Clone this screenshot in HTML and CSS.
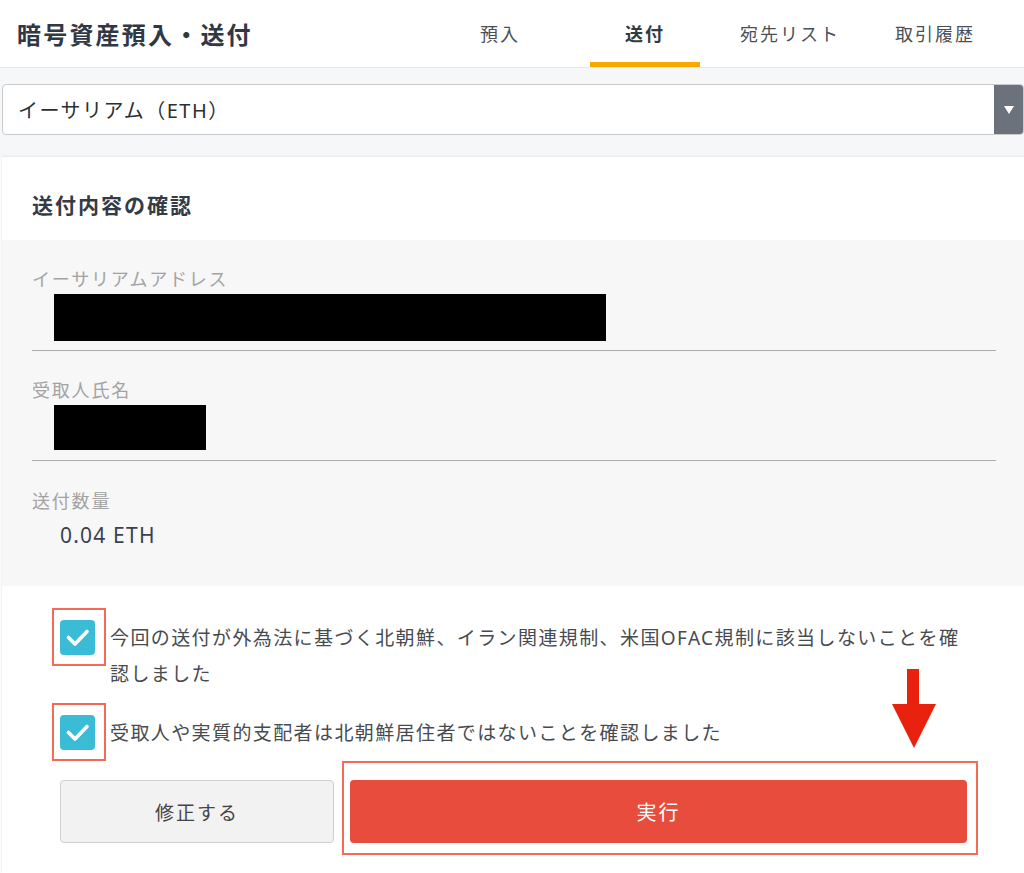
FILE: index.html
```html
<!DOCTYPE html>
<html lang="ja">
<head>
<meta charset="utf-8">
<title>暗号資産預入・送付</title>
<link rel="stylesheet" href="styles.css">
</head>
<body>
<header class="topbar">
  <h1 class="page-title">暗号資産預入・送付</h1>
  <nav class="tabs">
    <a class="tab">預入</a>
    <a class="tab active">送付</a>
    <a class="tab">宛先リスト</a>
    <a class="tab">取引履歴</a>
  </nav>
</header>

<div class="selector-area">
  <div class="select">
    <span class="select-text">イーサリアム（ETH）</span>
    <span class="select-arrow">
      <svg width="10" height="8" viewBox="0 0 10 8"><path d="M0 0 H10 L5 8 Z" fill="#fff"/></svg>
    </span>
  </div>
</div>

<section class="card">
  <h2 class="card-title">送付内容の確認</h2>
  <div class="details">
    <div class="field">
      <div class="field-label">イーサリアムアドレス</div>
      <div class="redacted redacted-address"></div>
    </div>
    <div class="field">
      <div class="field-label">受取人氏名</div>
      <div class="redacted redacted-name"></div>
    </div>
    <div class="field field-last">
      <div class="field-label">送付数量</div>
      <div class="field-value">0.04 ETH</div>
    </div>
  </div>

  <div class="confirm">
    <label class="check-row">
      <span class="highlight">
        <span class="checkbox">
          <svg width="35" height="35" viewBox="0 0 35 35"><path d="M8.5 17.5 L15 24 L27 11.5" fill="none" stroke="#fff" stroke-width="3.6" stroke-linecap="round" stroke-linejoin="round"/></svg>
        </span>
      </span>
      <span class="check-text">今回の送付が外為法に基づく北朝鮮、イラン関連規制、米国OFAC規制に該当しないことを確認しました</span>
    </label>
    <label class="check-row check-row-second">
      <span class="highlight">
        <span class="checkbox">
          <svg width="35" height="35" viewBox="0 0 35 35"><path d="M8.5 17.5 L15 24 L27 11.5" fill="none" stroke="#fff" stroke-width="3.6" stroke-linecap="round" stroke-linejoin="round"/></svg>
        </span>
      </span>
      <span class="check-text">受取人や実質的支配者は北朝鮮居住者ではないことを確認しました</span>
    </label>

    <div class="actions">
      <button class="btn btn-secondary">修正する</button>
      <div class="exec-highlight">
        <button class="btn btn-primary">実行</button>
      </div>
    </div>

    <svg class="arrow" width="44" height="79" viewBox="0 0 44 79">
      <rect x="15" y="0" width="12" height="36" fill="#e8220f"/>
      <path d="M0 35 H44 L22 79 Z" fill="#e8220f"/>
    </svg>
  </div>
</section>
</body>
</html>
```

FILE: styles.css
```css
* {
  box-sizing: border-box;
}

body {
  margin: 0;
  width: 1024px;
  background: #ffffff;
  font-family: "Noto Sans", "Noto Sans CJK JP", sans-serif;
  color: #333c48;
}

.topbar {
  display: flex;
  align-items: center;
  height: 68px;
  background: #ffffff;
  border-bottom: 1px solid #e9eaed;
  padding-left: 17px;
  padding-right: 34px;
}

.page-title {
  margin: 0;
  font-size: 24px;
  font-weight: 700;
  letter-spacing: 2.2px;
  color: #2f3844;
}

.tabs {
  margin-left: auto;
  display: flex;
  gap: 35px;
  align-self: stretch;
}

.tab {
  width: 110px;
  height: 67px;
  display: flex;
  align-items: center;
  justify-content: center;
  padding-top: 4px;
  border-bottom: 5px solid transparent;
  font-size: 18px;
  letter-spacing: 2px;
  color: #4a4f57;
}

.tab.active {
  border-bottom-color: #f8a900;
  font-weight: 700;
  color: #333a44;
}

.selector-area {
  background: #f6f7f9;
  padding: 16px 0 22px 2px;
}

.select {
  display: flex;
  height: 51px;
  background: #ffffff;
  border: 1px solid #c9cacc;
  border-radius: 4px;
  overflow: hidden;
}

.select-text {
  flex: 1;
  display: flex;
  align-items: center;
  padding-left: 15px;
  font-size: 20px;
  letter-spacing: 1.5px;
  color: #2b2f35;
}

.select-arrow {
  width: 29px;
  display: flex;
  align-items: center;
  justify-content: center;
  background: #6b727c;
}

.card {
  margin-left: 2px;
  background: #ffffff;
  box-shadow: 0 0 3px rgba(0, 0, 0, 0.12);
}

.card-title {
  margin: 0;
  height: 83px;
  padding: 36px 30px 0;
  font-size: 21px;
  line-height: 24px;
  font-weight: 700;
  letter-spacing: 2px;
  color: #333b46;
}

.details {
  background: #f7f7f7;
  padding: 0 28px 0 30px;
}

.field {
  padding: 27px 0 9px;
  border-bottom: 1px solid #acacac;
}

.field + .field {
  padding-bottom: 10px;
}

.field-last {
  border-bottom: none;
  padding: 28px 0 39px !important;
}

.field-label {
  font-size: 18px;
  line-height: 24px;
  letter-spacing: 1.8px;
  color: #a3a3a3;
}

.redacted {
  margin-top: 3px;
  margin-left: 22px;
  background: #000000;
}

.redacted-address {
  width: 552px;
  height: 47px;
}

.redacted-name {
  width: 152px;
  height: 45px;
}

.field-value {
  margin-top: 10px;
  margin-left: 28px;
  font-size: 21px;
  line-height: 24px;
  letter-spacing: 1.2px;
  color: #3a4250;
}

.confirm {
  position: relative;
  padding: 22px 28px 18px 50px;
}

.check-row {
  display: flex;
  align-items: flex-start;
}

.check-row-second {
  margin-top: 11px;
}

.highlight {
  flex: none;
  border: 2px solid #f36b57;
  padding: 10px 9px 9px 6px;
}

.checkbox {
  display: block;
  width: 35px;
  height: 35px;
  border-radius: 4px;
  background: #3bbcd6;
}

.checkbox svg {
  display: block;
}

.check-text {
  margin-left: 4px;
  margin-top: 12px;
  padding-right: 24px;
  font-size: 19px;
  line-height: 36px;
  letter-spacing: 1.4px;
  color: #474b50;
}

.actions {
  display: flex;
  align-items: flex-start;
  gap: 8px;
  padding-left: 8px;
}

.btn {
  font-family: inherit;
  height: 63px;
  border-radius: 4px;
  cursor: pointer;
}

.btn-secondary {
  margin-top: 19px;
  width: 274px;
  background: #f2f2f2;
  border: 1px solid #cfcfcf;
  font-size: 19px;
  letter-spacing: 2px;
  color: #454545;
}

.exec-highlight {
  border: 2px solid #f36b57;
  padding: 17px 9px 10px 6px;
}

.btn-primary {
  display: block;
  width: 617px;
  background: #e74c3c;
  border: none;
  font-size: 20px;
  letter-spacing: 2px;
  color: #ffffff;
}

.arrow {
  position: absolute;
  left: 890px;
  top: 83px;
}
```
